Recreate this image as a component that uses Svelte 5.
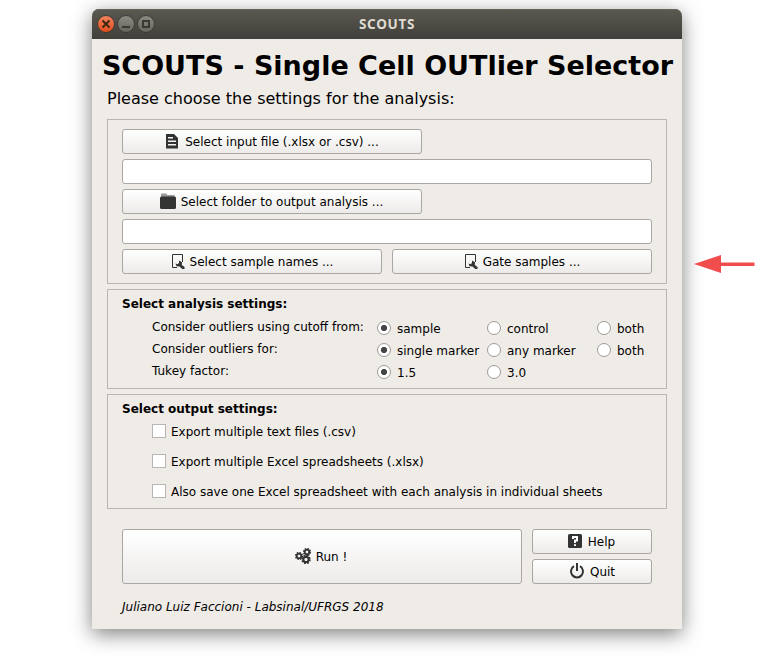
<script>
  let rows = $state([
    { label: 'Consider outliers using cutoff from:', name: 'cutoff', options: ['sample', 'control', 'both'], value: 'sample' },
    { label: 'Consider outliers for:', name: 'marker', options: ['single marker', 'any marker', 'both'], value: 'single marker' },
    { label: 'Tukey factor:', name: 'tukey', options: ['1.5', '3.0'], value: '1.5' }
  ]);
  const exports = [
    'Export multiple text files (.csv)',
    'Export multiple Excel spreadsheets (.xlsx)',
    'Also save one Excel spreadsheet with each analysis in individual sheets'
  ];
</script>

{#snippet gate()}
  <svg width="16" height="16" viewBox="0 0 16 16">
    <path d="M8 14.500H3.500V1.500H13.500V9" fill="none" stroke="#333" />
    <path d="M10 7.500V10L8.500 11.300L6.500 10.500L7.500 13.200L10.500 13.500L13.300 16H15.500V14L12.800 12L13 9.300Z" fill="#333" />
  </svg>
{/snippet}

{#snippet gear(x, y, r)}
  <g transform="translate({x} {y}) scale({r})" fill="none" stroke="#333">
    <circle r="2.400" stroke-width="1.900" />
    <circle r="3.600" stroke-width="1.400" stroke-dasharray="1.600 1.227" />
  </g>
{/snippet}

<main>
  <div class="window">
    <header>
      <svg class="controls" width="60" height="20" viewBox="0 0 60 20">
        <defs>
          <linearGradient id="red" x2="0" y2="1"><stop stop-color="#f38560" /><stop offset="1" stop-color="#e04b1c" /></linearGradient>
          <linearGradient id="gray" x2="0" y2="1"><stop stop-color="#8d8c83" /><stop offset="1" stop-color="#65645d" /></linearGradient>
        </defs>
        <g stroke="#3a3934" stroke-width="1">
          <circle cx="10" cy="10" r="8.500" fill="url(#red)" />
          <circle cx="30" cy="10" r="8.500" fill="url(#gray)" />
          <circle cx="50" cy="10" r="8.500" fill="url(#gray)" />
        </g>
        <path d="M6.500 6.500L13.500 13.500M13.500 6.500L6.500 13.500" stroke="#40280f" stroke-width="2" />
        <path d="M26 13H34M47 7H53V13H47Z" fill="none" stroke="#3a3934" stroke-width="2" />
      </svg>
      <span>SCOUTS</span>
    </header>
    <div class="body">
      <h1>SCOUTS - Single Cell OUTlier Selector</h1>
      <p class="intro">Please choose the settings for the analysis:</p>

      <section class="files">
        <button class="half">
          <svg width="16" height="16" viewBox="0 0 16 16"><path d="M2 1H10L14 5V15.500H2ZM4 4V5.500H9V4ZM4 7.500V9H12V7.500ZM4 11V12.500H12V11Z" fill="#333" fill-rule="evenodd" /></svg>
          <span>Select input file (.xlsx or .csv) ...</span>
        </button>
        <input type="text" aria-label="Input file" />
        <button class="half">
          <svg width="16" height="16" viewBox="0 0 16 16"><path d="M1 4V1.500Q1 .5 2 .5H6Q7 .5 7 2H13.500Q15 2 15 4Z" fill="#999" /><rect y="3.500" width="16" height="12.500" rx="1.500" fill="#333" /></svg>
          <span>Select folder to output analysis ...</span>
        </button>
        <input type="text" aria-label="Output folder" />
        <div class="pair">
          <button>{@render gate()}<span>Select sample names ...</span></button>
          <button>{@render gate()}<span>Gate samples ...</span></button>
        </div>
      </section>

      <section class="analysis">
        <h2>Select analysis settings:</h2>
        {#each rows as row}
          <div class="row">
            <span class="label">{row.label}</span>
            {#each row.options as option}
              <label><input type="radio" name={row.name} value={option} bind:group={row.value} /><span>{option}</span></label>
            {/each}
          </div>
        {/each}
      </section>

      <section class="output">
        <h2>Select output settings:</h2>
        {#each exports as item}
          <label><input type="checkbox" /><span>{item}</span></label>
        {/each}
      </section>

      <div class="actions">
        <button class="run">
          <svg width="16" height="16" viewBox="0 0 16 16">{@render gear(4, 8, 0.95)}{@render gear(12, 4, 0.95)}{@render gear(11, 11.500, 1.1)}</svg>
          <span>Run !</span>
        </button>
        <div class="side">
          <button>
            <svg width="16" height="16" viewBox="0 0 16 16"><rect x="1" y="1" width="14" height="14" rx="1.500" fill="#333" /><path d="M6 6V4H10V7.500H8V10M8 11.300V13" fill="none" stroke="#fff" stroke-width="2" /></svg>
            <span>Help</span>
          </button>
          <button class="quit">
            <svg width="16" height="16" viewBox="0 0 16 16"><path d="M5 3.200A6 6 0 1 0 11 3.200M8 0V8" fill="none" stroke="#333" stroke-width="2" /></svg>
            <span>Quit</span>
          </button>
        </div>
      </div>
      <footer>Juliano Luiz Faccioni - Labsinal/UFRGS 2018</footer>
    </div>
  </div>
  <svg class="arrow" width="62" height="20" viewBox="0 0 62 20"><path d="M0 10L27 1V8.500H60.500V12H27V19Z" fill="#f14d4d" /></svg>
</main>

<style>
  :global(body) { background: #fff; }
  main {
    box-sizing: border-box;
    display: flex;
    width: 776px;
    height: 659px;
    padding: 9px 0 0 92px;
    overflow: hidden;
    font: 12px/14px "DejaVu Sans", sans-serif;
    color: #000;
  }
  .window {
    width: 590px;
    height: 620px;
    flex: none;
    border-radius: 7px 7px 0 0;
    background: #efebe6;
    box-shadow: 0 5px 20px rgba(0, 0, 0, .5);
  }
  header {
    box-sizing: border-box;
    display: flex;
    align-items: center;
    height: 30px;
    padding-left: 4px;
    border-radius: 7px 7px 0 0;
    background: linear-gradient(#5b5950, #403f3a);
    box-shadow: inset 0 1px #66645b;
    color: #dfdbd2;
    font: bold 13.5px/18px "Noto Sans", sans-serif;
    letter-spacing: .7px;
  }
  header span { width: 462px; text-align: center; }
  .body { padding: 0 15px; }
  h1 {
    margin: 0 -15px;
    padding: 10px 0 0 1px;
    font-size: 27px;
    line-height: 34px;
    text-align: center;
    white-space: nowrap;
  }
  .intro { margin: 5px 0 10px; font-size: 16px; line-height: 21px; }
  section {
    box-sizing: border-box;
    border: 1px solid #b8b5b2;
    padding: 0 14px;
    margin-bottom: 5px;
  }
  .files { display: flex; flex-direction: column; gap: 5px; height: 165px; padding-top: 9px; }
  button, .files input {
    box-sizing: border-box;
    height: 25px;
    border: 1px solid #aaa6a4;
    border-radius: 3px;
    margin: 0;
    font: inherit;
    color: inherit;
  }
  button {
    display: flex;
    align-items: center;
    justify-content: center;
    gap: 5px;
    padding: 0 2px 0 0;
    background: linear-gradient(#fff, #edebe9);
    white-space: nowrap;
  }
  svg { flex: none; display: block; }
  button svg { margin-bottom: 2px; }
  .files input { width: 100%; background: #fff; }
  .half { width: 300px; padding-right: 1px; }
  .quit { padding-right: 0; }
  .pair { display: flex; gap: 10px; }
  .pair button { flex: 1; }
  h2 { margin: 0; font-size: 12px; line-height: 14px; }
  .analysis { height: 100px; padding-top: 7px; }
  .analysis h2 { margin-bottom: 6px; }
  .row { display: flex; height: 22px; padding-left: 30px; align-items: center; }
  .row .label { width: 225px; margin-bottom: 2px; }
  label { display: flex; align-items: center; white-space: nowrap; }
  .row label { width: 110px; gap: 6px; flex: none; }
  .row label span { padding-top: 1px; }
  .row label:last-child { width: auto; }
  label input {
    appearance: none;
    box-sizing: border-box;
    width: 14px;
    height: 14px;
    margin: 0;
    border: 1px solid #b8b5b2;
    background: #fff;
  }
  input[type="radio"] { border-color: #9d9a98; border-radius: 50%; }
  input[type="radio"]:checked { background: radial-gradient(circle, #444 2.7px, #fff 3.5px); }
  input[type="checkbox"]:checked { box-shadow: inset 0 0 0 3px #fff; background: #444; }
  .output { height: 115px; padding-top: 7px; }
  .output label { height: 30px; padding-left: 30px; gap: 5px; }
  .output label span { padding-top: 2px; }
  .actions { display: flex; gap: 10px; padding: 15px 15px 0; }
  .run { width: 400px; height: 55px; }
  .side { display: flex; flex-direction: column; gap: 5px; flex: 1; }
  footer { margin: 16px 15px 0; font-style: italic; }
  .arrow { margin: 245px 0 0 12px; }
</style>
